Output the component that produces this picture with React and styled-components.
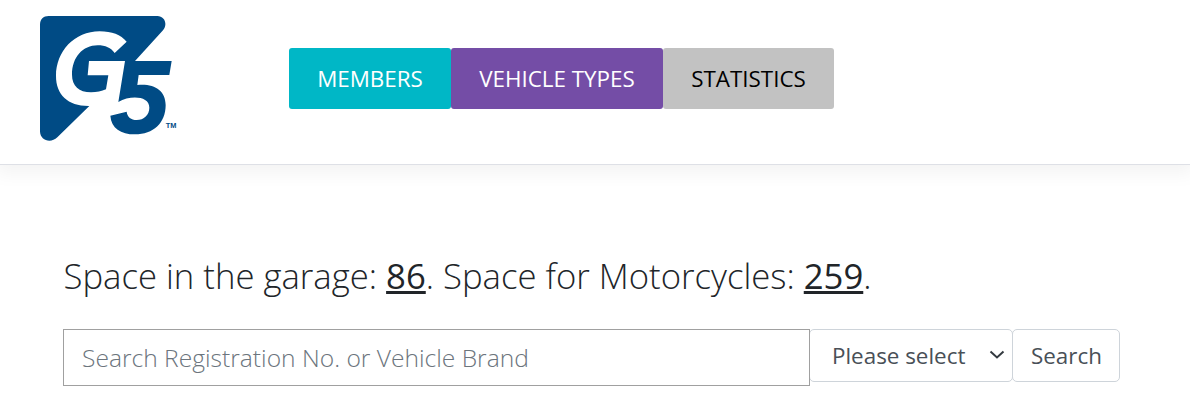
import React from "react";
import styled, { createGlobalStyle } from "styled-components";

const GlobalStyle = createGlobalStyle`
  *, *::before, *::after { box-sizing: border-box; }
  body {
    margin: 0;
    background: #fff;
    color: #212529;
    font-family: "Open Sans", "Noto Sans", sans-serif;
    font-weight: 300;
    overflow: hidden;
  }
`;

const Header = styled.header`
  display: flex;
  align-items: flex-start;
  height: 165px;
  padding: 16px 40px 0;
  border-bottom: 1px solid #dee0e6;
  box-shadow: 0 4px 18px 4px rgba(0, 0, 0, 0.05);
`;

const LogoLink = styled.a`
  display: block;
  width: 140px;
  height: 125px;
  margin-right: 109px;
`;

const Nav = styled.nav`
  display: flex;
  margin-top: 32px;
`;

const NavButton = styled.a`
  display: flex;
  align-items: center;
  justify-content: center;
  width: ${(p) => p.$width}px;
  height: 61px;
  padding-bottom: 1px;
  border-radius: 3px;
  background: ${(p) => p.$bg};
  color: ${(p) => p.$color || "#fff"};
  font-size: 22.4px;
  font-weight: 400;
  white-space: nowrap;
`;

const Main = styled.main`
  padding: 86px 63px 0;
`;

const Heading = styled.h1`
  margin: 0;
  padding-left: 0.5px;
  height: 50px;
  font-size: 34.7px;
  line-height: 50px;
  font-weight: 300;
  white-space: nowrap;
`;

const Count = styled.span`
  font-weight: 400;
  text-decoration: underline;
  text-decoration-thickness: 3px;
  text-underline-offset: 2px;
  text-decoration-skip-ink: none;
`;

const SearchForm = styled.form`
  display: flex;
  align-items: flex-start;
  margin-top: 28px;
`;

const SearchInput = styled.input`
  position: relative;
  z-index: 1;
  width: 747px;
  height: 57px;
  padding: 0 17px 1px 18px;
  border: 1px solid #a0a0a0;
  border-radius: 0;
  background: #fff;
  font: 300 24.6px "Open Sans", "Noto Sans", sans-serif;
  outline: none;
  &::placeholder { color: #6c757d; opacity: 1; }
`;

const FieldButton = styled.button`
  display: flex;
  align-items: center;
  justify-content: space-between;
  width: ${(p) => p.$width}px;
  height: 53px;
  margin-left: ${(p) => p.$overlap || 0}px;
  padding: ${(p) => p.$padding};
  border: 1px solid #ced4da;
  border-radius: 5px;
  background: #fff;
  color: #495057;
  font: 400 22.4px "Open Sans", "Noto Sans", sans-serif;
  white-space: nowrap;
`;

const ChevronIcon = styled.svg`
  width: 16px;
  height: 10px;
  margin-bottom: 1px;
`;

function Logo() {
  return (
    <svg width="140" height="125" viewBox="30 33 420 375" role="img" aria-label="G5">
      <path
        fill="#004b85"
        d="M56 33H382C404 33 414 58 399 76L315 168H425L418 210H326L322 240
        C373 235 407 257 407 300C407 354 370 388 315 388C272 388 244 370 241 332L290 320
        C292 336 303 345 320 345C342 345 358 329 358 308C358 273 302 270 265 291
        L285 168H177L173 211H235L228 253C215 259 200 262 183 262C147 262 126 242 126 209
        C126 157 158 121 203 121C226 121 243 129 254 144L290 110C272 89 246 79 209 79
        C133 79 78 139 78 213C78 270 115 304 178 303L82 397
        C62 417 30 406 30 379V59C30 43 40 33 56 33Z"
      />
      <text x="407" y="368" fill="#004b85" fontFamily="Liberation Sans, sans-serif" fontWeight="700" fontSize="21" textLength="32" lengthAdjust="spacingAndGlyphs">TM</text>
    </svg>
  );
}

function Chevron() {
  return (
    <ChevronIcon viewBox="0 0 16 10" fill="none" stroke="#343a40" strokeWidth="2">
      <path d="M1.5 1.5L8 7.5L14.5 1.5" />
    </ChevronIcon>
  );
}

export default function App() {
  return (
    <>
      <GlobalStyle />
      <Header>
        <LogoLink><Logo /></LogoLink>
        <Nav>
          <NavButton $width={162} $bg="#00b7c6">MEMBERS</NavButton>
          <NavButton $width={212} $bg="#744da6">VEHICLE TYPES</NavButton>
          <NavButton $width={171} $bg="#c2c2c2" $color="#000">STATISTICS</NavButton>
        </Nav>
      </Header>
      <Main>
        <Heading>
          Space in the garage: <Count>86</Count>. Space for Motorcycles: <Count>259</Count>.
        </Heading>
        <SearchForm onSubmit={(e) => e.preventDefault()}>
          <SearchInput placeholder="Search Registration No. or Vehicle Brand" />
          <FieldButton type="button" $width={204} $overlap={-1} $padding="0 7px 0 22px">
            Please select <Chevron />
          </FieldButton>
          <FieldButton $width={108} $overlap={-1} $padding="0 17px 0 18px">Search</FieldButton>
        </SearchForm>
      </Main>
    </>
  );
}
